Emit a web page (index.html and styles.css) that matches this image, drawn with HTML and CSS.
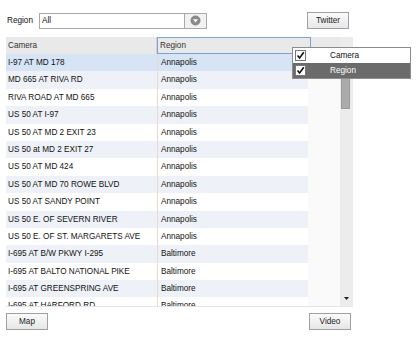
FILE: index.html
```html
<!DOCTYPE html>
<html lang="en">
<head>
  <meta charset="UTF-8" />
  <title>Cameras</title>
  <link rel="stylesheet" href="styles.css">
</head>
<body>

<div class="app">
  <div class="toolbar">
    <span class="label">Region</span>
    <div class="combo">
      <span class="combo-text">All</span>
      <span class="combo-btn">
        <svg width="11" height="11" viewBox="0 0 11 11"><circle cx="5.5" cy="5.5" r="5" fill="#8a8a8a"/><path d="M3 4.2 L8 4.2 L5.5 7.4 Z" fill="#fff"/></svg>
      </span>
    </div>
    <button class="btn twitter">Twitter</button>
  </div>

  <div class="grid">
    <div class="list">
      <div class="head">
        <div class="hcell cam">Camera</div>
        <div class="hcell reg active">Region</div>
      </div>
      <div class="rows">
        <div class="row sel"><span class="cam">I-97 AT MD 178</span><span class="reg">Annapolis</span></div>
        <div class="row alt"><span class="cam">MD 665 AT RIVA RD</span><span class="reg">Annapolis</span></div>
        <div class="row"><span class="cam">RIVA ROAD AT MD 665</span><span class="reg">Annapolis</span></div>
        <div class="row alt"><span class="cam">US 50 AT I-97</span><span class="reg">Annapolis</span></div>
        <div class="row"><span class="cam">US 50 AT MD 2 EXIT 23</span><span class="reg">Annapolis</span></div>
        <div class="row alt"><span class="cam">US 50 at MD 2 EXIT 27</span><span class="reg">Annapolis</span></div>
        <div class="row"><span class="cam">US 50 AT MD 424</span><span class="reg">Annapolis</span></div>
        <div class="row alt"><span class="cam">US 50 AT MD 70 ROWE BLVD</span><span class="reg">Annapolis</span></div>
        <div class="row"><span class="cam">US 50 AT SANDY POINT</span><span class="reg">Annapolis</span></div>
        <div class="row alt"><span class="cam">US 50 E. OF SEVERN RIVER</span><span class="reg">Annapolis</span></div>
        <div class="row"><span class="cam">US 50 E. OF ST. MARGARETS AVE</span><span class="reg">Annapolis</span></div>
        <div class="row alt"><span class="cam">I-695 AT B/W PKWY I-295</span><span class="reg">Baltimore</span></div>
        <div class="row"><span class="cam">I-695 AT BALTO NATIONAL PIKE</span><span class="reg">Baltimore</span></div>
        <div class="row alt"><span class="cam">I-695 AT GREENSPRING AVE</span><span class="reg">Baltimore</span></div>
        <div class="row"><span class="cam">I-695 AT HARFORD RD</span><span class="reg">Baltimore</span></div>
      </div>
    </div>
    <div class="scrollbar">
      <div class="thumb"></div>
      <svg class="arrow" width="5" height="3" viewBox="0 0 5 3"><path d="M0 0 L5 0 L2.5 3 Z" fill="#222"/></svg>
    </div>

    <!-- column chooser -->
    <div class="menu">
      <div class="item"><span class="check"><svg width="9" height="9" viewBox="0 0 9 9"><path d="M1.5 4.5 L3.6 7 L7.8 1.2" stroke="#111" stroke-width="1.6" fill="none"/></svg></span><span class="item-text">Camera</span></div>
      <div class="item on"><span class="check"><svg width="9" height="9" viewBox="0 0 9 9"><path d="M1.5 4.5 L3.6 7 L7.8 1.2" stroke="#111" stroke-width="1.6" fill="none"/></svg></span><span class="item-text">Region</span></div>
    </div>
  </div>

  <div class="footer">
    <button class="btn">Map</button>
    <button class="btn video">Video</button>
  </div>
</div>

</body>
</html>
```

FILE: styles.css
```css
* {
  box-sizing: border-box;
}

body {
  margin: 0;
  font-family: 'Liberation Sans', Arial, sans-serif;
  font-size: 8.2px;
  color: #111;
  background: #fff;
}

.app {
  width: 347px;
  margin-left: 6px;
}

.toolbar {
  display: flex;
  align-items: center;
  height: 17px;
  margin-top: 12px;
}

.label {
  width: 33px;
  padding-left: 1px;
}

.combo {
  display: flex;
  width: 168px;
  height: 16px;
  border: 1px solid #a9a9a9;
  background: #fff;
}

.combo-text {
  flex: 1;
  padding-left: 2px;
  line-height: 14px;
}

.combo-btn {
  width: 22px;
  border-left: 1px solid #a9a9a9;
  background: #f2f2f2;
  display: flex;
  align-items: center;
  justify-content: center;
}

.btn {
  font-family: inherit;
  font-size: 8.2px;
  color: #222;
  width: 42px;
  height: 17px;
  padding: 0;
  border: 1px solid #a0a0a0;
  background: linear-gradient(#fbfbfb, #e6e6e6);
}

.twitter {
  margin-left: auto;
  margin-right: 4px;
}

.grid {
  position: relative;
  display: flex;
  height: 270px;
  margin-top: 8px;
  border-bottom: 1px solid #e4e4e4;
  background: #fafafa;
}

.list {
  width: 334px;
  overflow: hidden;
}

.head {
  display: flex;
  height: 17px;
  background: #e9e9e9;
}

.hcell {
  line-height: 17px;
  color: #333;
}

.hcell.cam {
  width: 151px;
  padding-left: 2px;
  border-right: 1px solid #d0d0d0;
}

.hcell.reg {
  width: 154px;
  padding-left: 2px;
}

.hcell.active {
  border: 1px solid #7ea3d3;
  line-height: 15px;
}

.row {
  display: flex;
  width: 302px;
  height: 17.4px;
  line-height: 17.4px;
  background: #fff;
  white-space: nowrap;
}

.row.alt {
  background: #eef1f7;
}

.row.sel {
  background: #d6e4f5;
}

.row .cam {
  width: 151px;
  padding-left: 2px;
}

.row .reg {
  width: 151px;
  padding-left: 3px;
  border-left: 1px solid #e8dcc6;
}

.scrollbar {
  position: relative;
  width: 13px;
  background: #ececec;
}

.thumb {
  margin: 15px 0 0 1px;
  width: 9px;
  height: 57px;
  background: #ababab;
  border: 1px solid #9a9a9a;
}

.arrow {
  position: absolute;
  left: 4px;
  bottom: 6px;
}

.menu {
  position: absolute;
  left: 286px;
  top: 10px;
  width: 119px;
  border: 1px solid #8c8c8c;
  background: #fff;
}

.item {
  display: flex;
  align-items: center;
  height: 15px;
}

.item.on {
  background: #6b6b6b;
  color: #fff;
}

.check {
  display: flex;
  align-items: center;
  justify-content: center;
  width: 11px;
  height: 11px;
  margin-left: 2px;
  border: 1px solid #777;
  background: #fff;
}

.item-text {
  margin-left: 24px;
}

.footer {
  display: flex;
  justify-content: space-between;
  margin-top: 6px;
}

.video {
  margin-right: 2px;
}
```
